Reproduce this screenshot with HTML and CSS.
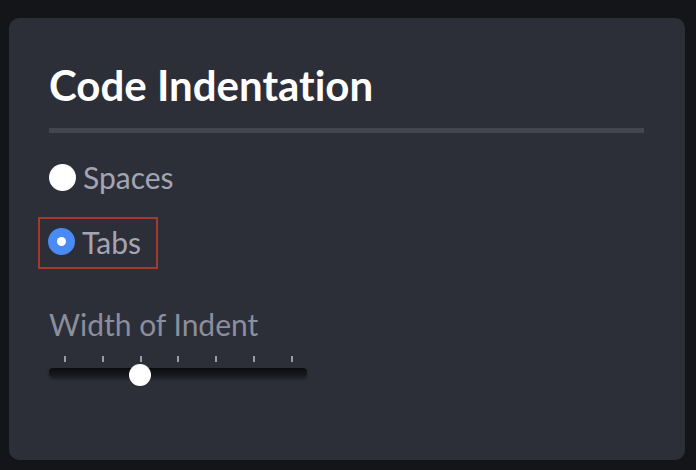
FILE: index.html
```html
<!DOCTYPE html>
<html>
<head>
<meta charset="utf-8">
<link rel="stylesheet" href="styles.css">
</head>
<body>
<div class="card">
  <h1 class="title">Code Indentation</h1>
  <div class="divider"></div>
  <div class="options">
    <label class="option">
      <span class="radio"></span>
      <span class="label">Spaces</span>
    </label>
    <label class="option option-selected">
      <span class="radio radio-on"></span>
      <span class="label">Tabs</span>
    </label>
  </div>
  <div class="field">
    <div class="field-label">Width of Indent</div>
    <div class="slider">
      <div class="ticks">
        <span class="tick"></span><span class="tick"></span><span class="tick"></span><span class="tick"></span><span class="tick"></span><span class="tick"></span><span class="tick"></span>
      </div>
      <div class="track">
        <span class="thumb"></span>
      </div>
    </div>
  </div>
</div>
</body>
</html>
```

FILE: styles.css
```css
html, body {
  margin: 0;
  padding: 0;
}
body {
  background: #141519;
  font-family: Lato, "Open Sans", sans-serif;
  font-variant-ligatures: none;
  width: 696px;
  height: 470px;
  overflow: hidden;
}
.card {
  margin: 18px 0 0 9px;
  width: 676px;
  height: 442px;
  box-sizing: border-box;
  background: #2d2f38;
  border-radius: 10px;
  padding: 42px 40px 0 40px;
}
.title {
  margin: 0;
  font-size: 42px;
  font-weight: 700;
  color: #ffffff;
  line-height: 50px;
}
.divider {
  margin-top: 18px;
  height: 5px;
  width: 595px;
  background: #43464f;
}
.options {
  display: flex;
  flex-direction: column;
  align-items: flex-start;
  margin-top: 24px;
}
.option {
  display: flex;
  align-items: center;
  gap: 7px;
  height: 40px;
}
.option-selected {
  box-sizing: border-box;
  margin-top: 20px;
  margin-left: -11px;
  padding: 0 15px 3px 8px;
  height: 52px;
  border: 2px solid #a5392c;
}
.radio {
  width: 27px;
  height: 27px;
  border-radius: 50%;
  background: #ffffff;
  flex: none;
}
.radio-on {
  background: #4a8af4;
  display: flex;
  align-items: center;
  justify-content: center;
}
.radio-on::after {
  content: "";
  width: 9px;
  height: 9px;
  border-radius: 50%;
  background: #ffffff;
}
.label {
  font-size: 30px;
  line-height: 36px;
  color: #a3a5b4;
}
.field {
  margin-top: 37px;
}
.field-label {
  font-size: 30px;
  color: #8b8e9d;
  line-height: 36px;
}
.slider {
  width: 258px;
  margin-top: 14px;
}
.ticks {
  display: flex;
  justify-content: space-between;
  padding: 0 14px 0 15px;
  height: 6px;
}
.tick {
  width: 2px;
  height: 6px;
  background: #9a9ca8;
}
.track {
  position: relative;
  margin-top: 6px;
  height: 9px;
  border-radius: 4px;
  background: linear-gradient(#0b0c0f, #1c1d22);
  box-shadow: 0 2px 3px rgba(0,0,0,0.35);
}
.thumb {
  position: absolute;
  left: 80px;
  top: -4px;
  width: 22px;
  height: 22px;
  border-radius: 50%;
  background: #ffffff;
}
```
